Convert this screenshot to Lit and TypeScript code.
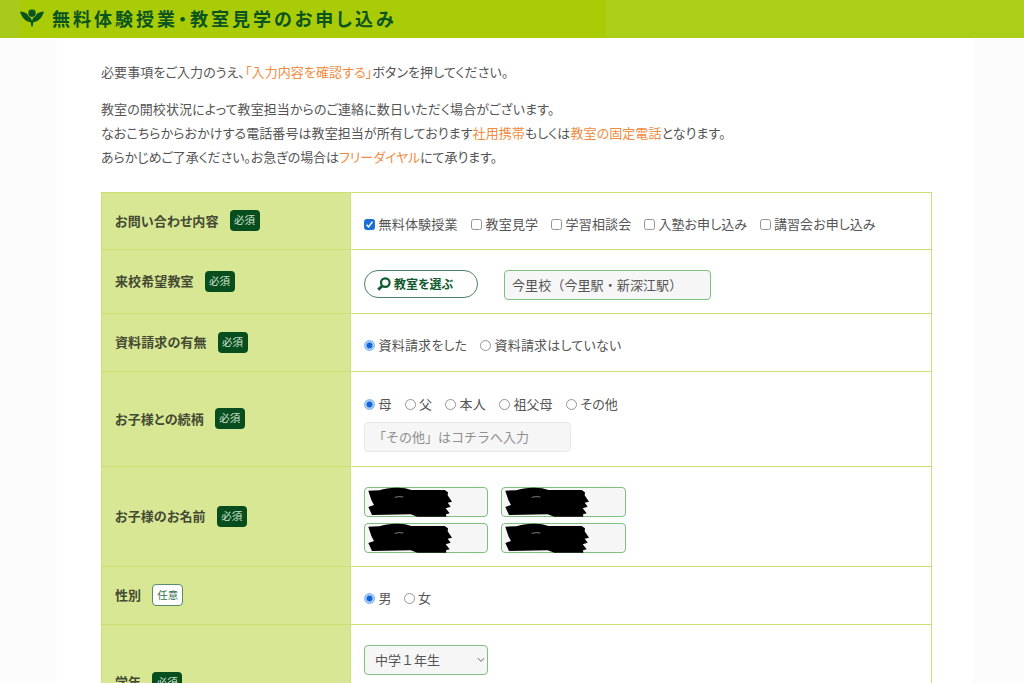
import { LitElement, html, css, svg } from "lit";
import { customElement } from "lit/decorators.js";

interface Choice {
  text: string;
  w: number;
  on?: boolean;
}

const inquiry: Choice[] = [
  { text: "無料体験授業", w: 107, on: true },
  { text: "教室見学", w: 80 },
  { text: "学習相談会", w: 93 },
  { text: "入塾お申し込み", w: 115.5 },
  { text: "講習会お申し込み", w: 120 },
];
const documents: Choice[] = [
  { text: "資料請求をした", w: 116, on: true },
  { text: "資料請求はしていない", w: 150 },
];
const relation: Choice[] = [
  { text: "母", w: 40.5, on: true },
  { text: "父", w: 40.5 },
  { text: "本人", w: 54 },
  { text: "祖父母", w: 67 },
  { text: "その他", w: 60 },
];
const gender: Choice[] = [
  { text: "男", w: 39.5, on: true },
  { text: "女", w: 40 },
];

@customElement("app-root")
export class AppRoot extends LitElement {
  static styles = css`
    :host {
      display: block;
      height: 683px;
      overflow: hidden;
      background: #fcfcfc;
      color: #555;
      font: 13px/24px "Noto Sans CJK JP", sans-serif;
      font-feature-settings: "palt";
    }
    * { box-sizing: border-box; }
    header {
      height: 38px;
      display: flex;
      align-items: center;
      gap: 8px;
      padding: 0 0 2px 20px;
      background: linear-gradient(90deg, #a8ca1c 0 20px, #aacc06 20px 606px, #abce19 606px);
    }
    h1 {
      margin: 0;
      font-size: 18px;
      line-height: 36px;
      font-weight: 700;
      letter-spacing: 3px;
      color: #0a5420;
      white-space: nowrap;
    }
    main {
      width: 916px;
      margin-left: 57px;
      height: 645px;
      padding: 22px 0 0 44px;
      background: #fff;
    }
    p { margin: 0 0 13px; white-space: nowrap; letter-spacing: 0.08px; }
    .note { margin-bottom: 23px; line-height: 24px; }
    .tight { letter-spacing: -0.07px; }
    em { font-style: normal; color: #f08c40; }
    .form {
      width: 831px;
      border: 1px solid #cbe070;
      border-bottom: 0;
      display: grid;
      grid-template-columns: 249px 1fr;
      grid-template-rows: 57px 64px 58px 95px 100px 58px 116px;
    }
    .th, .td { border-bottom: 1px solid #cbe070; display: flex; }
    .th {
      background: #d8e794;
      border-right: 1px solid #cfe37a;
      padding-left: 13px;
      padding-bottom: 1px;
      align-items: center;
      gap: 11px;
      font-weight: 700;
      color: #444a33;
    }
    .th span:first-child { letter-spacing: 0.1px; }
    .td {
      padding: 5px 0 0 13px;
      flex-direction: column;
      justify-content: center;
      background: #fff;
    }
    .td.fields { padding-top: 7px; }
    .row { display: flex; }
    .tag {
      width: 30px;
      height: 21px;
      border-radius: 4px;
      background: #084d1e;
      color: #cfe3cf;
      font-weight: 400;
      font-size: 10.5px;
      line-height: 20px;
      text-align: center;
    }
    .tag.opt {
      width: 31px;
      height: 22px;
      background: #fff;
      border: 1px solid #5b8b6b;
      color: #35704c;
    }
    label { display: flex; align-items: center; white-space: nowrap; gap: 3.5px; letter-spacing: 0.2px; }
    label:nth-child(n + 4) { letter-spacing: 0.05px; }
    label input {
      appearance: none;
      flex: none;
      margin: 1px 0 0;
      width: 11px;
      height: 11px;
      border: 1px solid #959595;
      border-radius: 2.5px;
      background: #fff;
    }
    label input[type="radio"] { border-radius: 50%; }
    label input[type="checkbox"]:checked {
      border-color: #1a6fd6;
      background: #1a6fd6 url("data:image/svg+xml,%3Csvg xmlns='http://www.w3.org/2000/svg' viewBox='0 0 9 9'%3E%3Cpath d='M1.6 4.8l2 2.1L7.5 1.8' fill='none' stroke='white' stroke-width='1.5'/%3E%3C/svg%3E");
    }
    label input[type="radio"]:checked {
      border-color: #7fb4f2;
      background: radial-gradient(circle, #1465d4 0 2.6px, #a9cef8 3.4px);
    }
    .pick {
      width: 114px;
      height: 28px;
      border: 1px solid #4d8062;
      border-radius: 14px;
      background: #fff;
      display: flex;
      align-items: center;
      gap: 3px;
      padding: 0 0 0 12px;
      color: #0f5a2c;
      font: 700 12px/24px "Noto Sans CJK JP", sans-serif;
      font-feature-settings: "palt";
      margin-right: 26px;
      white-space: nowrap;
    }
    .field {
      height: 30px;
      border: 1px solid #7fbf80;
      border-radius: 4px;
      background: #f6f6f6;
      font-feature-settings: normal;
      line-height: 28px;
      padding-left: 7px;
      white-space: nowrap;
    }
    .school { width: 207px; letter-spacing: 0.1px; }
    .other { width: 207px; border-color: #e8e8e8; color: #8f8f8f; padding-left: 8px; margin-top: 6px; }
    .names {
      display: grid;
      grid-template-columns: 124px 125px;
      gap: 6px 13px;
    }
    .name { padding: 0; }
    .name svg { display: block; margin: -1px; }
    .grade {
      width: 124px;
      padding: 0 2px 0 10px;
      display: flex;
      align-items: center;
      justify-content: space-between;
    }
    .td.top { justify-content: flex-start; padding-top: 20px; }
  `;

  private tag(required: boolean) {
    return required
      ? html`<span class="tag">必須</span>`
      : html`<span class="tag opt">任意</span>`;
  }

  private head(text: string, required = true) {
    return html`<div class="th"><span>${text}</span>${this.tag(required)}</div>`;
  }

  private choices(type: string, name: string, items: Choice[]) {
    return html`<div class="row">
      ${items.map(
        (c) => html`<label style="width:${c.w}px"
          ><input type=${type} name=${name} ?checked=${c.on} />${c.text}</label
        >`
      )}
    </div>`;
  }

  private redacted() {
    const strokes = svg`<path d="M13 11L46 10Q70 1 102 2Q125 2 142 9L242 9L252 16L251 25L264 44L251 47L260 59L245 64L257 79L246 82L247 89L160 89L140 82L24 84L13 60L30 54L22 39Z"/>
      <path d="M92 31q14-4 26-1" stroke="#bbb" stroke-width="2" fill="none"/>`;
    return html`<div class="field name">
      <svg width="124" height="30" viewBox="0 0 372 90">${strokes}</svg>
    </div>`;
  }

  render() {
    return html`
      <header>
        <svg width="24" height="18" viewBox="0 0 24 18" fill="#0a5420">
          <path d="M0 2.500C6 3 10.500 6 12 12C13.500 6 18 3 24 2.500C22 9 18.500 12.500 13.300 13.200L12.700 17.500H11.300L10.700 13.200C5.500 12.500 2 9 0 2.500Z" />
          <circle cx="12" cy="4.200" r="4.100" stroke="#aacc06" stroke-width="0.800" />
        </svg>
        <h1>無料体験授業・教室見学のお申し込み</h1>
      </header>
      <main>
        <p class="lead">必要事項をご入力のうえ、<em>「入力内容を確認する」</em>ボタンを押してください。</p>
        <p class="note">
          教室の開校状況によって教室担当からのご連絡に数日いただく場合がございます。<br />なおこちらからおかけする電話番号は教室担当が所有しております<em>社用携帯</em>もしくは<em>教室の固定電話</em>となります。<br /><span class="tight">あらかじめご了承ください。お急ぎの場合は<em>フリーダイヤル</em>にて承ります。</span>
        </p>
        <div class="form">
          ${this.head("お問い合わせ内容")}
          <div class="td">${this.choices("checkbox", "inquiry", inquiry)}</div>
          ${this.head("来校希望教室")}
          <div class="td fields">
            <div class="row">
              <button class="pick">
                <svg width="14" height="14" viewBox="0 0 14 14" fill="none" stroke="#0f5a2c">
                  <circle cx="8.300" cy="5.600" r="4.300" stroke-width="2.200" />
                  <path d="M5 9.200L1.200 12.600" stroke-width="2.800" />
                </svg>
                教室を選ぶ
              </button>
              <div class="field school">今里校（今里駅・新深江駅）</div>
            </div>
          </div>
          ${this.head("資料請求の有無")}
          <div class="td">${this.choices("radio", "documents", documents)}</div>
          ${this.head("お子様との続柄")}
          <div class="td">
            ${this.choices("radio", "relation", relation)}
            <div class="field other">「その他」はコチラへ入力</div>
          </div>
          ${this.head("お子様のお名前")}
          <div class="td fields">
            <div class="names">
              ${[0, 1, 2, 3].map(() => this.redacted())}
            </div>
          </div>
          ${this.head("性別", false)}
          <div class="td">${this.choices("radio", "gender", gender)}</div>
          ${this.head("学年")}
          <div class="td top">
            <div class="field grade">
              <span>中学１年生</span>
              <svg width="8" height="6" viewBox="0 0 8 6" fill="none" stroke="#666">
                <path d="M1 1.200L4 4.400L7 1.200" />
              </svg>
            </div>
          </div>
        </div>
      </main>
    `;
  }
}
